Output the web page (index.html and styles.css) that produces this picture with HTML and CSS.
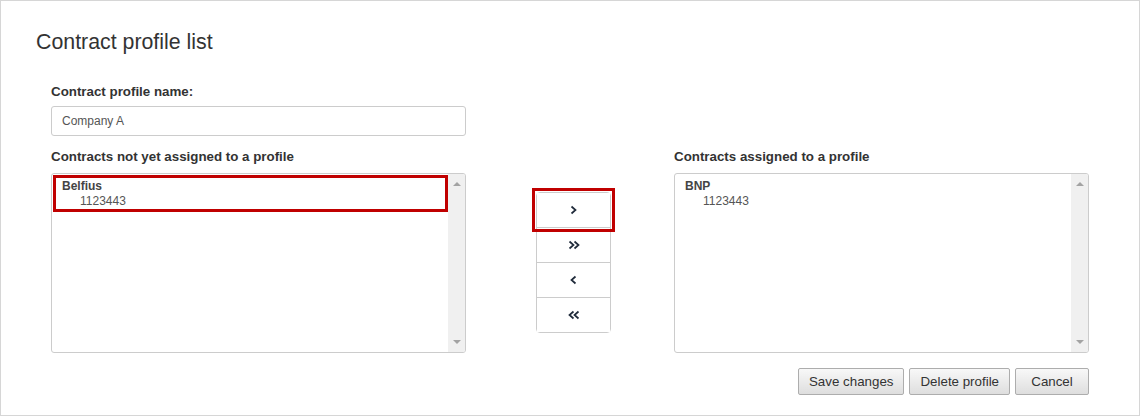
FILE: index.html
```html
<!DOCTYPE html>
<html lang="en">

<head>
    <meta charset="UTF-8">
    <title>Contract profile list</title>
    <link rel="stylesheet" href="styles.css">
</head>

<body>
    <div class="page">
        <h1 class="title">Contract profile list</h1>

        <div class="form">
            <label class="field-label" for="profileName">Contract profile name:</label>
            <input class="text-input" id="profileName" type="text" value="Company A">

            <div class="lists">
                <div class="col">
                    <div class="field-label">Contracts not yet assigned to a profile</div>
                    <div class="listbox">
                        <div class="list-items">
                            <div class="group selected">
                                <div class="group-name">Belfius</div>
                                <div class="option">1123443</div>
                            </div>
                        </div>
                        <div class="scrollbar">
                            <span class="arrow-up"></span>
                            <span class="arrow-down"></span>
                        </div>
                    </div>
                </div>

                <div class="mover">
                    <div class="move-btn highlight">
                        <svg width="7" height="10" viewBox="0 0 7 10"><polyline points="1.5,1.5 5.5,5 1.5,8.5"/></svg>
                    </div>
                    <div class="move-btn">
                        <svg width="12" height="10" viewBox="0 0 12 10"><polyline points="1.5,1.5 5.5,5 1.5,8.5"/><polyline points="6.5,1.5 10.5,5 6.5,8.5"/></svg>
                    </div>
                    <div class="move-btn">
                        <svg width="7" height="10" viewBox="0 0 7 10"><polyline points="5.5,1.5 1.5,5 5.5,8.5"/></svg>
                    </div>
                    <div class="move-btn">
                        <svg width="12" height="10" viewBox="0 0 12 10"><polyline points="5.5,1.5 1.5,5 5.5,8.5"/><polyline points="10.5,1.5 6.5,5 10.5,8.5"/></svg>
                    </div>
                </div>

                <div class="col col-right">
                    <div class="field-label">Contracts assigned to a profile</div>
                    <div class="listbox">
                        <div class="list-items">
                            <div class="group">
                                <div class="group-name">BNP</div>
                                <div class="option">1123443</div>
                            </div>
                        </div>
                        <div class="scrollbar">
                            <span class="arrow-up"></span>
                            <span class="arrow-down"></span>
                        </div>
                    </div>
                </div>
            </div>

            <div class="actions">
                <button class="btn">Save changes</button>
                <button class="btn">Delete profile</button>
                <button class="btn">Cancel</button>
            </div>
        </div>
    </div>
</body>

</html>
```

FILE: styles.css
```css
* {
    margin: 0;
    padding: 0;
    box-sizing: border-box;
}

body {
    font-family: "Liberation Sans", Arial, sans-serif;
    color: #333;
    background: #fff;
}

.page {
    width: 1140px;
    height: 416px;
    border: 1px solid #d6d6d6;
    padding: 28px 0 0 35px;
}

.title {
    font-size: 21.33px;
    font-weight: normal;
    line-height: 26px;
    color: #333;
}

.form {
    width: 1038px;
    margin: 28px 0 0 15px;
}

.field-label {
    display: block;
    font-size: 13.33px;
    font-weight: bold;
    line-height: 18px;
    color: #333;
    margin-bottom: 5px;
}

.text-input {
    display: block;
    width: 415px;
    height: 30px;
    border: 1px solid #ccc;
    border-radius: 3px;
    padding: 0 10px;
    font-family: "Liberation Sans", Arial, sans-serif;
    font-size: 12px;
    color: #555;
    outline: none;
}

.lists {
    display: flex;
    margin-top: 12px;
}

.col {
    width: 415px;
}

.col .field-label {
    margin-bottom: 7px;
}

.col-right {
    margin-left: 63px;
}

.listbox {
    display: flex;
    height: 180px;
    border: 1px solid #ccc;
    border-radius: 3px;
    overflow: hidden;
}

.list-items {
    flex: 1;
    padding: 1px 0 0 1px;
}

.group {
    border: 3px solid transparent;
    padding: 1px 6px 0;
    font-size: 12px;
    line-height: 15px;
    color: #555;
}

.group.selected {
    border-color: #c00000;
}

.group-name {
    font-weight: bold;
    color: #444;
}

.option {
    padding-left: 18px;
}

.scrollbar {
    width: 17px;
    background: #f0f0f0;
    display: flex;
    flex-direction: column;
    justify-content: space-between;
    align-items: center;
    padding: 8px 0;
}

.arrow-up,
.arrow-down {
    width: 0;
    height: 0;
    border-left: 4px solid transparent;
    border-right: 4px solid transparent;
}

.arrow-up {
    border-bottom: 4px solid #a3a3a3;
}

.arrow-down {
    border-top: 4px solid #a3a3a3;
}

.mover {
    width: 75px;
    margin: 44px 0 0 70px;
    align-self: flex-start;
    border: 1px solid #ccc;
    border-radius: 4px;
}

.move-btn {
    height: 35px;
    display: flex;
    align-items: center;
    justify-content: center;
    border-top: 1px solid #ccc;
    background: #fff;
}

.move-btn:first-child {
    height: 34px;
    border-top: none;
}

.move-btn.highlight {
    outline: 3px solid #c00000;
    outline-offset: 2px;
}

.move-btn svg {
    fill: none;
    stroke: #1f2a3a;
    stroke-width: 1.7;
}

.actions {
    display: flex;
    justify-content: flex-end;
    gap: 5px;
    margin-top: 15px;
}

.btn {
    height: 27px;
    min-width: 74px;
    padding: 0 10px;
    border: 1px solid #adadad;
    border-radius: 2px;
    background: linear-gradient(#f8f8f8, #dedede);
    font-family: "Liberation Sans", Arial, sans-serif;
    font-size: 13.33px;
    color: #333;
}
```
